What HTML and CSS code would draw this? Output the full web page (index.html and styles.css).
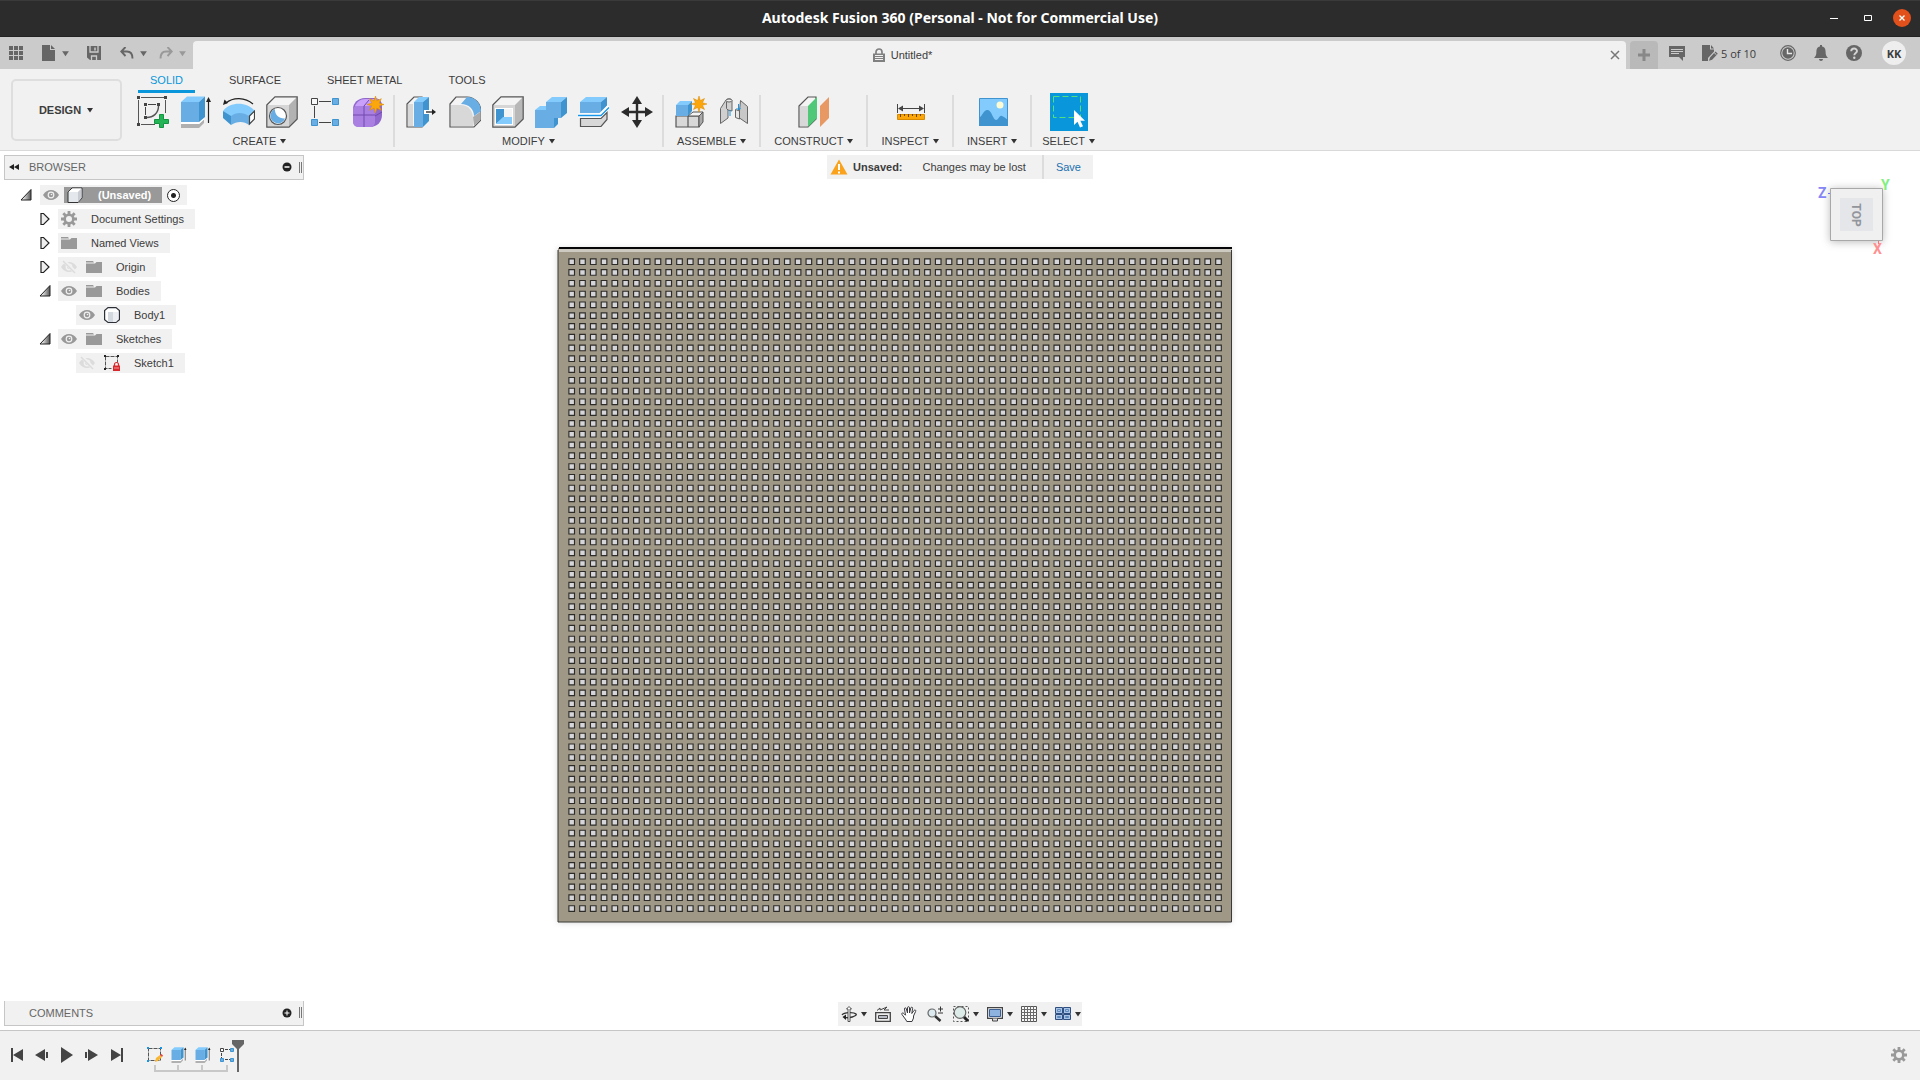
FILE: index.html
```
<!DOCTYPE html>
<html lang="en">

<head>
    <meta charset="UTF-8">
    <meta name="viewport" content="width=device-width, initial-scale=1.0">
    <title>Autodesk Fusion 360 (Personal - Not for Commercial Use)</title>
    <link rel="stylesheet" href="styles.css">
</head>

<body>
    <!-- shared icons -->
    <svg class="defs" width="0" height="0" aria-hidden="true">
        <symbol id="eye" viewBox="0 0 16 16">
            <path d="M0 8C2 4.500 5 3 8 3s6 1.500 8 5c-2 3.500-5 5-8 5S2 11.500 0 8z" fill="#999" />
            <circle cx="8" cy="8" r="3.400" fill="#f1f1f1" />
            <circle cx="8" cy="8" r="2.200" fill="#999" />
            <circle cx="8.500" cy="7.500" r=".8" fill="#f1f1f1" />
        </symbol>
        <symbol id="eye-off" viewBox="0 0 16 16">
            <path d="M0 8C2 4.500 5 3 8 3s6 1.500 8 5c-2 3.500-5 5-8 5S2 11.500 0 8z" fill="#dcdcdc" />
            <circle cx="8" cy="8" r="3.400" fill="#f1f1f1" />
            <circle cx="8" cy="8" r="2" fill="#dcdcdc" />
            <path d="M2 1l13 13" stroke="#f1f1f1" stroke-width="3.500" />
            <path d="M2 2l12 12" stroke="#dcdcdc" stroke-width="1.500" />
        </symbol>
        <symbol id="folder" viewBox="0 0 16 16">
            <path d="M0 2h7l1 1.500H0zM0 4.500h9l1.500-1.500H16V14H0z" fill="#999" />
        </symbol>
        <symbol id="gear" viewBox="0 0 16 16">
            <g fill="none" stroke="currentColor">
                <circle cx="8" cy="8" r="4.300" stroke-width="2.600" />
                <path d="M8 0v3M8 13v3M0 8h3M13 8h3M2.300 2.300l2.200 2.200M11.500 11.500l2.200 2.200M2.300 13.700l2.200-2.200M11.500 4.500l2.200-2.200" stroke-width="2.800" />
            </g>
        </symbol>
        <symbol id="closed" viewBox="0 0 12 16">
            <path d="M2 2.500h2.500l5.500 5.500-5.500 5.500H2z" fill="#eee" stroke="#222" stroke-width="1.200" />
        </symbol>
        <symbol id="open" viewBox="0 0 12 16">
            <path d="M11 2.500v10.500H1z" fill="url(#arrowFill)" stroke="#222" />
        </symbol>
        <linearGradient id="arrowFill">
            <stop offset=".2" stop-color="#eee" />
            <stop offset="1" stop-color="#555" />
        </linearGradient>
        <symbol id="caret" viewBox="0 0 8 6">
            <path d="M1 1h6L4 5.500z" fill="currentColor" />
        </symbol>
        <symbol id="star" viewBox="0 0 16 16">
            <path d="M8 0l1.300 4.500L13.500 2.500l-2 4.200L16 8l-4.500 1.300 2 4.200-4.200-2L8 16l-1.300-4.500-4.200 2 2-4.200L0 8l4.500-1.300-2-4.200 4.200 2z" fill="#fba60a" stroke="#d98b00" stroke-width=".5" />
        </symbol>
        <symbol id="extrude" viewBox="0 0 32 32">
            <path d="M1 28h18l5-5v4l-5 5H1z" fill="#b0b0b0" />
            <path d="M1 26h18l5-5v2.500l-5 4.500H1z" fill="#fff" />
            <path d="M1 6h18v20H1z" fill="#68aee5" />
            <path d="M1 6l6-5.500h18L19 6z" fill="#83cbfd" />
            <path d="M19 6l6-5.500V21l-6 5z" fill="#3f94cf" />
            <path d="M28.500 27V3" stroke="#222" stroke-width="1.200" />
            <path d="M26 6l2.500-5L31 6z" fill="#222" />
        </symbol>
        <symbol id="cursor" viewBox="0 0 12 18">
            <path d="M0 0v15l3.500-3.200L6 17.500l3-1.300-2.600-5.500H11z" fill="#fff" />
        </symbol>
    </svg>

    <header class="titlebar">
        <h1>Autodesk Fusion 360 (Personal - Not for Commercial Use)</h1>
        <div class="window-buttons">
            <button aria-label="Minimize"><svg width="18" height="18"><path d="M5 9.500h8" stroke="#fff" /></svg></button>
            <button aria-label="Maximize"><svg width="18" height="18"><path d="M5.500 6.500h7v5h-7z" fill="none" stroke="#fff" /></svg></button>
            <button aria-label="Close"><svg width="18" height="18"><circle cx="9" cy="9" r="9" fill="#e2501b" /><path d="M6.500 6.500l5 5m0-5l-5 5" stroke="#fff" stroke-width="1.300" /></svg></button>
        </div>
    </header>

    <div class="topbar">
        <div class="quick">
            <button class="q-grid" aria-label="Data panel"><svg width="14" height="14" fill="#666"><path d="M0 0h4v4H0zM5 0h4v4H5zM10 0h4v4h-4zM0 5h4v4H0zM5 5h4v4H5zM10 5h4v4h-4zM0 10h4v4H0zM5 10h4v4H5zM10 10h4v4h-4z" /></svg></button>
            <button class="q-file" aria-label="File"><svg width="14" height="16" fill="#666"><path d="M0 0h8v5h5v11H0z" /><path d="M9 0l4 4H9z" /></svg><svg class="caret big"><use href="#caret" /></svg></button>
            <button class="q-save" aria-label="Save"><svg width="14" height="14"><path d="M0 0h14v14H3L0 11.500z" fill="#666" /><path d="M3 0v6h8V0M4.500 14v-4h5v4" fill="none" stroke="#cbcbcb" stroke-width="1.300" /><path d="M8 1.500v3" stroke="#cbcbcb" stroke-width="1.500" /></svg></button>
            <button class="q-undo" aria-label="Undo"><svg width="14" height="12" fill="none" stroke="#666" stroke-width="1.900"><path d="M5.500 0L1.200 4.500 5.500 9M1.500 4.500H7c3.500 0 5.500 2.500 5.500 7" /></svg><svg class="caret big"><use href="#caret" /></svg></button>
            <button class="q-redo" aria-label="Redo"><svg width="14" height="12" fill="none" stroke="#999" stroke-width="1.900"><path d="M8.500 0l4.300 4.500L8.500 9M12.500 4.500H7c-3.500 0-5.500 2.500-5.500 7" /></svg><svg class="caret big"><use href="#caret" /></svg></button>
        </div>
        <div class="doc-tab">
            <span class="doc-name">
                <svg width="12" height="14"><path d="M3 6V4a3 3 0 016 0v2" fill="none" stroke="#808080" stroke-width="1.700" /><path d="M0 5.500h12V14H0z" fill="#808080" /><path d="M2 7.500h8M2 9.500h8M2 11.500h8" stroke="#f1f1f1" /></svg>
                Untitled*
            </span>
            <button aria-label="Close tab"><svg width="10" height="10"><path d="M1 1l8 8M9 1L1 9" stroke="#777" stroke-width="1.500" /></svg></button>
        </div>
        <button class="new-tab" aria-label="New tab"><svg width="14" height="14"><path d="M7 1v12M1 7h12" stroke="#888" stroke-width="3" /></svg></button>
        <div class="account">
            <button aria-label="Notes"><svg width="16" height="16"><path d="M0 1h16v11h-2v4l-4-4H0z" fill="#666" /><path d="M2 4.500h12M2 6.500h12M2 8.500h8" stroke="#cbcbcb" /></svg></button>
            <button class="docs"><svg width="16" height="16"><path d="M0 0h8v4.500h4v2L6 13v3H0z" fill="#666" /><path d="M9 0l3 3.500H9zM7 15.800l1-3.300 5.500-6 2.300 2.200-5.700 6z" fill="#666" /><path d="M12 7.500l2.500 2.300" stroke="#cbcbcb" /></svg>5 of 10</button>
            <button class="clock" aria-label="Job status"><svg width="16" height="16"><circle cx="8" cy="8" r="7.300" fill="none" stroke="#666" stroke-width="1.200" /><circle cx="8" cy="8" r="5.700" fill="#666" /><path d="M7.500 4v4.500H12" fill="none" stroke="#e8e8e8" stroke-width="1.400" /></svg></button>
            <button class="bell" aria-label="Notifications"><svg width="16" height="16" fill="#666"><path d="M7 0h2v1.500c3 .5 3.600 3 3.600 5.500 0 3 .8 4 2.400 6H1c1.600-2 2.400-3 2.400-6C3.400 4.500 4 2 7 1.500zM6 14h4c0 2.500-4 2.500-4 0z" /></svg></button>
            <button class="help" aria-label="Help"><svg width="16" height="16"><circle cx="8" cy="8" r="8" fill="#666" /><path d="M5.200 6.300C5.300 2.600 11 2.700 11 6c0 2-2.700 2-2.700 4.200" fill="none" stroke="#d4d4d4" stroke-width="1.900" /><circle cx="8.300" cy="12.700" r="1.200" fill="#d4d4d4" /></svg></button>
            <button class="avatar">KK</button>
        </div>
    </div>

    <div class="ribbon">
        <button class="workspace">DESIGN<svg class="caret"><use href="#caret" /></svg></button>
        <div class="tools">
            <nav class="tabs">
                <a class="active" href="#solid">SOLID</a>
                <a href="#surface">SURFACE</a>
                <a href="#sheet-metal">SHEET METAL</a>
                <a href="#tools">TOOLS</a>
            </nav>
            <div class="groups">
                <div class="group">
                    <div class="icons">
                        <button aria-label="Create Sketch"><svg width="32" height="32">
                            <path d="M4 1.500h23M1.500 4v23M4 28.500h14M28.500 4v13" fill="none" stroke="#555" />
                            <path d="M8.500 11v8M11 8.500h8" fill="none" stroke="#444" />
                            <path d="M21.500 10c0 7-5 11.500-12 11.500" fill="none" stroke="#555" stroke-width="1.400" />
                            <path d="M0 0h3v3H0zM27 0h3v3h-3zM0 27h3v3H0zM7 7h3v3H7zM20 7h3v3h-3zM7 20h3v3H7z" fill="#444" />
                            <path d="M22.500 18.500h4v5h5v4h-5v4h-4v-4h-5v-4h5z" fill="#22b455" stroke="#139440" />
                        </svg></button>
                        <button aria-label="Extrude"><svg width="32" height="32"><use href="#extrude" /></svg></button>
                        <button aria-label="Revolve"><svg width="32" height="32">
                            <path d="M3 7C10 1 22 1 30 8" fill="none" stroke="#222" stroke-width="1.200" />
                            <path d="M0 9l1.500-5.500L5 7z" fill="#222" />
                            <path d="M0 15c7-9 23-10 32 0l-6 7c-5-4-13-4-18 0z" fill="#83cbfd" />
                            <path d="M0 15l8 5v9l-8-7z" fill="#3f94cf" />
                            <path d="M8 20c5-4 12-4 18 0v9c-5-4-12-4-18 0z" fill="#68aee5" />
                            <path d="M26.500 20l5-5v8l-5 5z" fill="#fff" stroke="#444" stroke-width="1.200" />
                        </svg></button>
                        <button aria-label="Hole"><svg width="32" height="32">
                            <path d="M1 9h22v22H1z" fill="#d6d6d6" /><path d="M1 9l8-8h22l-8 8z" fill="#f4f4f4" /><path d="M23 9l8-8v22l-8 8z" fill="#b2b2b2" />
                            <path d="M.8 9L9 .8h22.200V23L23 31.200H.8z" fill="none" stroke="#555" stroke-width="1.200" />
                            <circle cx="12" cy="20" r="8.500" fill="#fff" stroke="#555" stroke-width="1.200" />
                            <path d="M9 13a7.500 7.500 0 1010 9.500C13 23 8.500 18.500 9 13z" fill="#68aee5" />
                        </svg></button>
                        <button aria-label="Pattern"><svg width="32" height="32">
                            <path d="M10 5.500h12M5.500 10v12M10 26.500h12" stroke="#444" />
                            <path d="M2.500 2.500h6v6h-6z" fill="#f8f8f8" stroke="#444" />
                            <path d="M23.500 2.500h6v6h-6zM2.500 23.500h6v6h-6zM23.500 23.500h6v6h-6z" fill="#68aee5" stroke="#3f94cf" />
                        </svg></button>
                        <button aria-label="Create Form"><svg width="32" height="32">
                            <path d="M1 13c0-6 5-11 12-11h9c6 0 8 4 8 8v9c0 7-5 12-12 12H9c-6 0-8-2-8-7z" fill="#9067cc" />
                            <path d="M3 10c2-4 5-7 10-7h11c2 0 3 2 4 3l-5 5H4z" fill="#c9a0fa" />
                            <path d="M1 14c0-3 2-4 4-4h14c3 0 4 2 4 4v12c0 3-2 5-5 5H7c-4 0-6-2-6-6z" fill="#a980e2" />
                            <path d="M12 10v21M1 19h22M23 20l7-4M12 10l5-6" fill="none" stroke="#7248ae" />
                            <svg x="15" y="0" width="17" height="17"><use href="#star" /></svg>
                        </svg></button>
                    </div>
                    <button class="label">CREATE<svg class="caret"><use href="#caret" /></svg></button>
                </div>
                <div class="group">
                    <div class="icons">
                        <button aria-label="Press Pull"><svg width="32" height="32">
                            <path d="M1 8l7-7h8v30H1z" fill="#f4f4f4" stroke="#555" stroke-width="1.200" /><path d="M2 8h5v22H2z" fill="#d8d8d8" />
                            <path d="M8 6h9v25H8z" fill="#68aee5" /><path d="M8 6l5-5h10l-6 5z" fill="#83cbfd" /><path d="M17 6l6-5v24l-6 6z" fill="#3f94cf" />
                            <path d="M18 16h7" stroke="#fff" stroke-width="4" /><path d="M20 16h8" stroke="#222" stroke-width="1.300" /><path d="M26 13l4 3-4 3z" fill="#222" />
                        </svg></button>
                        <button aria-label="Fillet"><svg width="32" height="32">
                            <path d="M1 8l6-7h11c8 0 14 7 14 15v8l-7 7H1z" fill="#f4f4f4" stroke="#555" stroke-width="1.200" />
                            <path d="M2 9h9c9 0 13 6 13 14v7H2z" fill="#d8d8d8" /><path d="M24 21l7-5v8l-6 6z" fill="#aaa" />
                            <path d="M12 8l6-7c9 0 14 7 14 14l-7 5c0-7-5-12-13-12z" fill="#68aee5" />
                        </svg></button>
                        <button aria-label="Shell"><svg width="32" height="32">
                            <path d="M1 9h22v22H1z" fill="#d6d6d6" /><path d="M1 9l8-8h22l-8 8z" fill="#f4f4f4" /><path d="M23 9l8-8v22l-8 8z" fill="#b8b8b8" />
                            <path d="M.8 9L9 .8h22.200V23L23 31.200H.8z" fill="none" stroke="#555" stroke-width="1.200" />
                            <path d="M3 12h18v17H3z" fill="#fff" /><path d="M4 13h8v8l-8 7z" fill="#3f94cf" /><path d="M12 13h8v8h-8z" fill="#f4f4f4" /><path d="M4 28l7-7h9v7z" fill="#83cbfd" />
                        </svg></button>
                        <button aria-label="Combine"><svg width="32" height="32">
                            <path d="M0 14h11V6h15v16h-7v10H0z" fill="#68aee5" />
                            <path d="M11 6l6-5h15l-6 5zM0 14l5-4h6v4z" fill="#83cbfd" /><path d="M26 6l6-5v16l-6 5zM19 22h4v6l-4 4z" fill="#3f94cf" />
                        </svg></button>
                        <button aria-label="Split Body"><svg width="32" height="32">
                            <path d="M2 6h21v11H2z" fill="#68aee5" /><path d="M2 6l6-5h21l-6 5z" fill="#83cbfd" /><path d="M23 6l6-5v9l-6 7z" fill="#3f94cf" />
                            <path d="M2.500 22.500H23l6-6v7l-6 7H2.500z" fill="#d8d8d8" stroke="#555" stroke-width="1.200" />
                            <path d="M0 19.500h22l9-9" fill="none" stroke="#fff" stroke-width="4" /><path d="M0 19.500h23l8-8" fill="none" stroke="#1596e8" stroke-width="1.300" />
                        </svg></button>
                        <button aria-label="Move"><svg width="32" height="32">
                            <path d="M16 4v24M4 16h24" stroke="#2b2b2b" stroke-width="2.400" />
                            <path d="M16 0l5 8H11zM16 32l5-8H11zM0 16l8-5v10zM32 16l-8-5v10z" fill="#2b2b2b" />
                        </svg></button>
                    </div>
                    <button class="label">MODIFY<svg class="caret"><use href="#caret" /></svg></button>
                </div>
                <div class="group">
                    <div class="icons">
                        <button aria-label="New Component"><svg width="32" height="32">
                            <path d="M1 20h12v11H1zM13 20h11v11H13z" fill="#d8d8d8" stroke="#555" stroke-width="1.200" />
                            <path d="M13 20l5-4h10l-4 4z" fill="#f4f4f4" stroke="#555" /><path d="M24 20l4-4v10l-4 5z" fill="#aaa" stroke="#555" />
                            <path d="M1 9h12v11H1z" fill="#68aee5" /><path d="M1 9l4-4h12l-4 4z" fill="#83cbfd" /><path d="M13 9l4-4v10l-4 5z" fill="#3f94cf" />
                            <svg x="16" y="0" width="16" height="16"><use href="#star" /></svg>
                        </svg></button>
                        <button aria-label="Joint"><svg width="32" height="32" stroke="#666">
                            <path d="M2.500 12.500L7 5.500c1-3.500 7-3.500 7-.5v10l-4-1v8l-7.500 5.500z" fill="#d0d0d0" /><path d="M8.500 5.500v7l1.500 1.500" fill="none" /><ellipse cx="11" cy="4.500" rx="3" ry="1.500" fill="#eee" />
                            <path d="M22.500 4.500l7 6v17l-8-5.500V15z" fill="#c8c8c8" /><path d="M17.500 13.500l4 1.500v8l-4-1.500z" fill="#e6e6e6" />
                            <path d="M12 14v6M20.500 8v6m-2-2l2 2 2-2" fill="none" stroke="#1596e8" />
                        </svg></button>
                    </div>
                    <button class="label">ASSEMBLE<svg class="caret"><use href="#caret" /></svg></button>
                </div>
                <div class="group">
                    <div class="icons">
                        <button aria-label="Offset Plane"><svg width="32" height="32">
                            <path d="M1 10l9-9h8v22l-8 8H1z" fill="#f4f4f4" stroke="#555" stroke-width="1.200" /><path d="M2 10h8v20H2z" fill="#d8d8d8" />
                            <path d="M10 10l9-9v21l-9 9z" fill="#50c878" /><path d="M22 10l9-9v21l-9 9z" fill="#e89862" />
                        </svg></button>
                    </div>
                    <button class="label">CONSTRUCT<svg class="caret"><use href="#caret" /></svg></button>
                </div>
                <div class="group">
                    <div class="icons">
                        <button aria-label="Measure"><svg width="32" height="32">
                            <path d="M2.500 8v9M29.500 8v9M4 12.500h24" stroke="#444" /><path d="M3 12.500l5-3v6zM29 12.500l-5-3v6z" fill="#444" />
                            <path d="M2.500 18.500h27v5h-27z" fill="#fba60a" stroke="#d98b00" /><path d="M5.500 18v3M9.500 18v2M13.500 18v3M17.500 18v2M21.500 18v3M25.500 18v2" stroke="#6d4500" />
                        </svg></button>
                    </div>
                    <button class="label">INSPECT<svg class="caret"><use href="#caret" /></svg></button>
                </div>
                <div class="group">
                    <div class="icons">
                        <button aria-label="Insert Image"><svg width="32" height="32">
                            <path d="M2.500 2.500h28v27h-28z" fill="#83cbfd" stroke="#3f94cf" /><circle cx="23" cy="9" r="3.500" fill="#fdfbd4" />
                            <path d="M2 22c4-3 5-9 9-8s5 10 8 10 3-5 6-4 4 3 6 4v6H2z" fill="#3f94cf" />
                        </svg></button>
                    </div>
                    <button class="label">INSERT<svg class="caret"><use href="#caret" /></svg></button>
                </div>
                <div class="group">
                    <div class="icons">
                        <button class="selected" aria-label="Select"><svg width="38" height="38">
                            <path d="M3.500 3.500h27v21h-27z" fill="none" stroke="#53e07a" stroke-dasharray="6 3" />
                            <svg x="24" y="17" width="12" height="18"><use href="#cursor" /></svg>
                        </svg></button>
                    </div>
                    <button class="label">SELECT<svg class="caret"><use href="#caret" /></svg></button>
                </div>
            </div>
        </div>
    </div>

    <main class="canvas">
        <svg class="plate" width="690" height="690" viewBox="550 240 690 690" aria-label="Body1">
            <path class="plate-shadow" d="M558 249h673v673H558z" />
            <path d="M558 248h674v674H558z" fill="#a09886" />
            <path d="M559 249h673v3H559z" fill="#cdcac2" />
            <path d="M558 250V922H1231.500V250" fill="none" stroke="#3a3a38" />
            <path d="M559 248h673" stroke="#060608" stroke-width="2" />
            <path id="holes" fill="#d6d6da" stroke="#2c2b28" stroke-width="1.150" />
        </svg>

        <aside class="side">
            <section class="browser">
                <div class="panel-head">
                    <svg width="10" height="8"><path d="M5 1v6L0 4zM10 1v6L5 4z" fill="#222" /></svg>
                    <h2>BROWSER</h2>
                    <button aria-label="Collapse"><svg width="10" height="10"><circle cx="5" cy="5" r="4.500" fill="#222" /><path d="M2.500 5h5" stroke="#fff" stroke-width="1.500" /></svg></button>
                    <span class="grip"></span>
                </div>
                <ul class="tree">
                    <li class="root">
                        <svg class="arrow"><use href="#open" /></svg>
                        <div class="node">
                            <svg class="ico"><use href="#eye" /></svg>
                            <span class="current">
                                <svg class="ico" viewBox="0 0 16 16"><path d="M1 5l4-4h10v10l-4 4.500H1z" fill="#e4e7ec" stroke="#333" /><path d="M1.500 5l4-3.500h9L11 5z" fill="#fff" /><path d="M11 5l3.500-3.500V11L11 15z" fill="#c8ccd2" /></svg>
                                (Unsaved)
                            </span>
                            <input type="radio" aria-label="Activate component" checked>
                        </div>
                    </li>
                    <li>
                        <svg class="arrow"><use href="#closed" /></svg>
                        <div class="node"><svg class="ico gear"><use href="#gear" /></svg><span>Document Settings</span></div>
                    </li>
                    <li>
                        <svg class="arrow"><use href="#closed" /></svg>
                        <div class="node"><svg class="ico"><use href="#folder" /></svg><span>Named Views</span></div>
                    </li>
                    <li>
                        <svg class="arrow"><use href="#closed" /></svg>
                        <div class="node"><svg class="ico"><use href="#eye-off" /></svg><svg class="ico"><use href="#folder" /></svg><span>Origin</span></div>
                    </li>
                    <li>
                        <svg class="arrow"><use href="#open" /></svg>
                        <div class="node"><svg class="ico"><use href="#eye" /></svg><svg class="ico"><use href="#folder" /></svg><span>Bodies</span></div>
                    </li>
                    <li class="leaf">
                        <div class="node"><svg class="ico"><use href="#eye" /></svg>
                            <svg class="ico" viewBox="0 0 16 16"><path d="M4 .6h8l3.400 3v9l-3.400 2.800H4L.6 12.600v-9z" fill="#fff" stroke="#2c3038" stroke-width="1.200" /><path d="M4 5h5v10H4z" fill="#d3d7de" /><path d="M9 5h5v7l-2 3H9z" fill="#eceef2" /></svg>
                            <span>Body1</span></div>
                    </li>
                    <li>
                        <svg class="arrow"><use href="#open" /></svg>
                        <div class="node"><svg class="ico"><use href="#eye" /></svg><svg class="ico"><use href="#folder" /></svg><span>Sketches</span></div>
                    </li>
                    <li class="leaf">
                        <div class="node"><svg class="ico"><use href="#eye-off" /></svg>
                            <svg class="ico" viewBox="0 0 16 16"><path d="M1.500 1.500h12v6M1.500 1.500v12h6" fill="none" stroke="#555" stroke-dasharray="4 1" /><path d="M0 0h2v2H0zM13 0h2v2h-2zM0 13h2v2H0z" fill="#222" /><path d="M9 10.500h7V16H9z" fill="#d9282c" /><path d="M10.500 11V9.500a2 2 0 014 0V11" fill="none" stroke="#d9282c" stroke-width="1.200" /><path d="M10 13h5" stroke="#f29a9a" /></svg>
                            <span>Sketch1</span></div>
                    </li>
                </ul>
            </section>
            <section class="panel-head comments">
                <h2>COMMENTS</h2>
                <button aria-label="Add comment"><svg width="10" height="10"><circle cx="5" cy="5" r="4.500" fill="#222" /><path d="M2.500 5h5M5 2.500v5" stroke="#fff" /></svg></button>
                <span class="grip"></span>
            </section>
        </aside>

        <div class="middle">
            <div class="notice">
                <svg width="18" height="16"><path d="M9 .5L17.500 15.500H.5z" fill="#faa21b" /><path d="M9 5v6M9 12.500v2" stroke="#fff" stroke-width="2" /></svg>
                <strong>Unsaved:</strong>
                <span>Changes may be lost</span>
                <a href="#save">Save</a>
            </div>
            <div class="navbar">
                <button aria-label="Orbit"><svg width="16" height="16"><path d="M1 9c2-3 12-3 14-1s-8 5-12 3" fill="none" stroke="#333" stroke-width="1.300" /><path d="M5 8.500L1.500 11 5 14z" fill="#222" /><path d="M7 15.500V3H5.500L8 .5 10.500 3H9v12.500z" fill="#fff" stroke="#444" stroke-width=".9" /></svg><svg class="caret"><use href="#caret" /></svg></button>
                <button aria-label="Look At"><svg width="16" height="16"><path d="M.7 6.700h14.600v8.600H.7z" fill="#eee" stroke="#444" stroke-width="1.300" /><path d="M3.500 9.500h9v3h-9z" fill="#b9bec6" stroke="#444" /><path d="M2 4.500L5 2v2l7-3-3 3h5" fill="none" stroke="#444" /></svg></button>
                <button aria-label="Pan"><svg width="16" height="16"><path d="M5 14L1 8.500c-1-1.500 1-2 2-.8l1.500 1.500L3.500 3c-.2-1.600 1.500-1.600 1.800-.2L6.500 7V1.800c0-1.500 2-1.500 2 0V7l1.300-5c.4-1.400 2-1 1.800.4L10.800 7.500 13 4.500c1-1.200 2.300-.2 1.600 1L12.500 10v2L11 15.500H5.800z" fill="#fff" stroke="#3a3a40" /></svg></button>
                <button aria-label="Zoom"><svg width="16" height="16"><path d="M8 10l5.500 5" stroke="#333" stroke-width="2.500" /><circle cx="5" cy="7" r="4" fill="#dceaf0" stroke="#666" stroke-width="1.200" /><path d="M11 3h5M13.500.5v5M11 7h5" stroke="#333" /></svg></button>
                <button aria-label="Zoom Window"><svg width="16" height="16"><path d="M.5.5h15v15H.5z" fill="none" stroke="#555" stroke-dasharray="2 2" /><path d="M10 10l5 5" stroke="#222" stroke-width="3" /><circle cx="7" cy="6.500" r="5.800" fill="#dceae8" stroke="#666" stroke-width="1.200" /></svg><svg class="caret"><use href="#caret" /></svg></button>
                <button aria-label="Display Settings"><svg width="16" height="16"><path d="M.6 1.600h14.800v10.800H.6z" fill="#f4f4f4" stroke="#444" stroke-width="1.200" /><path d="M2.500 3.500h11v7h-11z" fill="#8eb3de" stroke="#3c5f94" /><path d="M5.500 12.500v2.500h5v-2.500" fill="#ddd" stroke="#444" /></svg><svg class="caret"><use href="#caret" /></svg></button>
                <button aria-label="Grid and Snaps"><svg width="16" height="16"><path d="M.5.5h15v15H.5z" fill="#f8f8f8" stroke="#555" /><path d="M3.500 0v16M6.500 0v16M9.500 0v16M12.500 0v16M0 3.500h16M0 6.500h16M0 9.500h16M0 12.500h16" stroke="#6a6a6a" /></svg><svg class="caret"><use href="#caret" /></svg></button>
                <button aria-label="Viewports"><svg width="16" height="16"><path d="M.5 1.500h7v6h-7zM8.500 1.500h7v6h-7zM.5 8.500h7v5h-7zM8.500 8.500h7v5h-7z" fill="#a9c4e6" stroke="#2f4f80" /><path d="M2.500 3.500h3v2h-3zM10.500 3.500h3v2h-3zM2.500 10.500h3v1h-3zM10.500 10.500h3v1h-3z" fill="none" stroke="#5f88bd" /></svg><svg class="caret"><use href="#caret" /></svg></button>
            </div>
        </div>

        <div class="view">
            <svg class="cube" width="90" height="90" viewBox="0 0 90 90" aria-label="View cube">
                <path class="cube-shadow" d="M20 18h53v53H20z" />
                <path d="M20.500 18.500h52v52h-52z" fill="#f0f0f0" stroke="#a8a8a8" />
                <path d="M30 28h33v33H30z" fill="#e5e6e9" />
                <path d="M18 23.500h2" stroke="#7070ff" />
                <path d="M68.500 71v3" stroke="#ff7070" />
                <text x="8" y="28" fill="#8585f5">Z</text>
                <text x="71" y="20" fill="#80f080">Y</text>
                <text x="63" y="84" fill="#ff9090">X</text>
                <text class="face" transform="translate(42 45) rotate(90)">TOP</text>
            </svg>
        </div>
    </main>

    <footer class="timeline">
        <div class="playback">
            <button aria-label="To start"><svg width="14" height="14"><path d="M1 0h2v14H1zM13 1v12L3 7z" /></svg></button>
            <button aria-label="Step back"><svg width="14" height="14"><path d="M10 1v12L0 7zM11 4h2v6h-2z" /></svg></button>
            <button aria-label="Play"><svg width="14" height="16"><path d="M1 0v16l12-8z" /></svg></button>
            <button aria-label="Step forward"><svg width="14" height="14"><path d="M3 1v12l10-6zM0 4h2v6H0z" /></svg></button>
            <button aria-label="To end"><svg width="14" height="14"><path d="M11 0h2v14h-2zM1 1v12l10-6z" /></svg></button>
        </div>
        <div class="history">
            <div class="features">
                <button aria-label="Sketch1"><svg width="16" height="16"><path d="M1.500 1.500h12v12h-12z" fill="none" stroke="#555" stroke-dasharray="4 1" /><path d="M0 0h2v2H0zM13 0h2v2h-2zM0 13h2v2H0z" fill="#1596e8" /><path d="M8 15l1-4 4-3 2 2-4 4z" fill="#f7b733" /><path d="M13 8l2 2 1-1.500L14.500 7z" fill="#e44" /></svg></button>
                <button aria-label="Extrude1"><svg width="16" height="16"><use href="#extrude" /></svg></button>
                <button aria-label="Extrude2"><svg width="16" height="16"><use href="#extrude" /></svg></button>
                <button aria-label="Pattern1"><svg width="16" height="16"><path d="M6 2.500h5M2.500 6v5M6 12.500h5" stroke="#444" stroke-dasharray="3 1" /><path d="M1.500 1.500h3v3h-3z" fill="#fff" stroke="#444" /><path d="M11.500 1.500h3v3h-3zM1.500 11.500h3v3h-3zM11.500 11.500h3v3h-3z" fill="#68aee5" stroke="#3f94cf" /></svg></button>
            </div>
            <svg class="bracket" width="74" height="7"><path d="M1 0v6h72V0M24 0v6M48 0v6" fill="none" stroke="#c8c8c8" stroke-width="2" /></svg>
        </div>
        <svg class="marker" width="12" height="32"><path d="M0 0h12v4L7 9v23H5V9L0 4z" fill="#666" /></svg>
        <button class="settings" aria-label="Timeline settings"><svg class="ico gear"><use href="#gear" /></svg></button>
    </footer>

    <script src="script.js"></script>
</body>

</html>
```

FILE: styles.css
```
* {
    box-sizing: border-box;
}

html,
body {
    height: 100%;
    margin: 0;
    padding: 0;
}

body {
    display: flex;
    flex-direction: column;
    overflow: hidden;
    background-color: #fff;
    color: #3c3c3c;
    font-family: "Liberation Sans", Arial, sans-serif;
    font-size: 11px;
}

h1,
h2,
ul {
    margin: 0;
    padding: 0;
}

button {
    display: flex;
    align-items: center;
    justify-content: center;
    margin: 0;
    padding: 0;
    border: none;
    background: none;
    color: inherit;
    font: inherit;
}

a {
    color: inherit;
    text-decoration: none;
}

svg {
    display: block;
    flex-shrink: 0;
}

.defs {
    position: absolute;
}

.caret {
    width: 8px;
    height: 6px;
    color: #333;
}

.caret.big {
    width: 9px;
    height: 7px;
    color: inherit;
}

.ico {
    width: 16px;
    height: 16px;
}

.gear {
    color: #999;
}

/* window title */
.titlebar {
    display: flex;
    align-items: center;
    height: 37px;
    padding: 0 9px 2px;
    background-color: #2c2c2c;
    border-top: 1px solid #3a3a3a;
    border-bottom: 1px solid #222;
    color: #fff;
}

.titlebar h1 {
    flex: 1;
    padding-left: 86px;
    text-align: center;
    font-family: "Noto Sans", "Open Sans", sans-serif;
    font-size: 14px;
    line-height: 20px;
}

.window-buttons {
    display: flex;
    gap: 16px;
}

/* quick access and document tab */
.topbar {
    display: flex;
    height: 32px;
    background-color: #cbcbcb;
}

.quick {
    display: flex;
    align-items: center;
    width: 193px;
    padding-left: 9px;
    color: #666;
}

.quick button {
    gap: 5px;
}

.q-file {
    margin-left: 19px;
}

.q-save {
    margin-left: 17px;
}

.q-undo {
    margin-left: 19px;
}

.q-redo {
    margin-left: 11px;
}

.q-redo .big {
    color: #999;
}

.doc-tab {
    display: flex;
    flex: 1;
    align-items: center;
    margin-top: 4px;
    padding-right: 6px;
    background-color: #f1f1f1;
    border-radius: 4px 4px 0 0;
}

.doc-name {
    display: flex;
    flex: 1;
    align-items: center;
    justify-content: center;
    gap: 6px;
    padding-left: 2px;
}

.new-tab {
    width: 28px;
    margin: 4px 11px 0 4px;
    background-color: #b9b9b9;
    border-radius: 4px 4px 0 0;
}

.account {
    display: flex;
    align-items: center;
    padding-right: 14px;
}

.docs {
    gap: 3px;
    margin-left: 17px;
    font-family: "Open Sans", sans-serif;
}

.clock {
    margin-left: 24px;
}

.bell,
.help {
    margin-left: 17px;
}

.avatar {
    width: 24px;
    height: 24px;
    margin-left: 20px;
    background-color: #eee;
    border-radius: 50%;
    font-family: "Open Sans", sans-serif;
    font-weight: bold;
}

/* ribbon */
.ribbon {
    display: flex;
    height: 82px;
    background-color: #f1f1f1;
    border-bottom: 1px solid #d9d9d9;
}

.workspace {
    gap: 5px;
    width: 111px;
    height: 62px;
    margin: 10px 4px 0 11px;
    border: 2px solid #dedede;
    border-radius: 5px;
    font-weight: bold;
}

.tabs {
    display: flex;
    gap: 22px;
    height: 24px;
    padding-left: 12px;
}

.tabs a {
    padding: 0 12px;
    line-height: 23px;
}

.tabs .active {
    border-bottom: 3px solid #0a96da;
    color: #0a96da;
}

.groups {
    display: flex;
}

.group {
    position: relative;
    padding: 0 6px 0 5px;
}

.group:last-child {
    padding-left: 2px;
}

.group:not(:last-child)::after {
    content: "";
    position: absolute;
    top: 2px;
    right: 0;
    bottom: 3px;
    width: 2px;
    background-color: #dcdcdc;
}

.icons {
    display: flex;
    justify-content: center;
    height: 38px;
}

.icons button {
    width: 43px;
}

.icons .selected {
    width: 38px;
    background-color: #0a96da;
}

.label {
    gap: 3px;
    width: 100%;
    height: 19px;
    padding: 0 8px;
}

/* canvas */
.canvas {
    position: relative;
    display: grid;
    grid-template-columns: 304px 1fr 304px;
    flex: 1;
    min-height: 0;
}

/* the model sits freely on the canvas */
.plate {
    position: absolute;
    top: 89px;
    left: 550px;
}

.plate-shadow {
    fill: #fff;
    filter: drop-shadow(0 0 3px #ccc);
}

.cube-shadow {
    fill: #fff;
    filter: drop-shadow(0 1px 4px #bbb);
}

.side,
.middle {
    display: flex;
    flex-direction: column;
    justify-content: space-between;
    padding: 4px 0;
}

.side {
    padding-left: 4px;
}

.middle {
    align-items: center;
}

.panel-head {
    display: flex;
    align-items: center;
    height: 25px;
    padding: 0 1px 1px 4px;
    background-color: #f1f1f1;
    border: 1px solid #c6c6c6;
    color: #666;
}

.panel-head h2 {
    flex: 1;
    padding-left: 10px;
    font-size: 11px;
    font-weight: normal;
}

.comments {
    border-top: none;
}

.comments h2 {
    padding-left: 20px;
}

.grip {
    width: 3px;
    height: 11px;
    margin-left: 7px;
    border: 1px solid #777;
    border-width: 0 1px;
}

.tree {
    display: flex;
    flex-direction: column;
    gap: 4px;
    padding: 5px 0 0 35px;
    list-style: none;
}

.tree li {
    display: flex;
    align-items: center;
    gap: 7px;
}

.tree .root {
    margin-left: -19px;
    gap: 8px;
}

.tree .leaf {
    margin-left: 37px;
}

.arrow {
    width: 12px;
    height: 16px;
}

.node {
    display: flex;
    align-items: center;
    gap: 9px;
    height: 20px;
    padding: 0 11px 0 3px;
    background-color: #f1f1f1;
}

.node > span {
    padding-left: 5px;
}

.root .node {
    gap: 5px;
    padding-right: 7px;
}

.node .current {
    display: flex;
    align-items: center;
    gap: 15px;
    height: 16px;
    padding: 0 11px 0 3px;
    background-color: #999;
    color: #fff;
    font-weight: bold;
}

.node input {
    appearance: none;
    width: 13px;
    height: 13px;
    margin: 0;
    border: 1px solid #222;
    border-radius: 50%;
    background: radial-gradient(#222 0 2px, #fff 3px);
}

.notice {
    display: flex;
    align-items: center;
    height: 24px;
    padding-left: 3px;
    background-color: #f1f1f1;
}

.notice strong {
    margin: 0 20px 0 5px;
}

.notice a {
    margin-left: 16px;
    padding: 0 12px;
    border-left: 2px solid #dcdcdc;
    color: #1a70b0;
    line-height: 24px;
}

.navbar {
    display: flex;
    align-items: center;
    gap: 10px;
    height: 24px;
    padding: 0 3px;
    background-color: #f1f1f1;
}

.navbar .caret {
    margin: 0 -3px 0 3px;
}

.view {
    display: flex;
    justify-content: flex-end;
    align-items: flex-start;
    padding: 19px 20px 0 0;
}

.cube text {
    font-family: "Roboto", sans-serif;
    font-size: 14px;
    font-weight: bold;
}

.cube .face {
    font-size: 12px;
    fill: #92959c;
    text-anchor: middle;
}

/* timeline */
.timeline {
    display: flex;
    align-items: flex-start;
    height: 50px;
    background-color: #f1f1f1;
    border-top: 1px solid #c6c6c6;
}

.playback {
    display: flex;
    align-items: center;
    gap: 11px;
    padding: 16px 0 0 10px;
    fill: #444;
}

.history {
    display: flex;
    flex-direction: column;
    align-items: center;
    gap: 2px;
    padding: 16px 0 0 23px;
}

.features {
    display: flex;
    gap: 8px;
}

.marker {
    margin: 9px 0 0 -3px;
}

.settings {
    margin: 16px 13px 0 auto;
}
```

FILE: script.js
```
// 61 x 61 square holes of the plate, drawn as one path
var count = 61;
var pitch = 10.78;
var size = 5.6;
var startX = 568.9;
var startY = 258.9;
var d = "";

for (var row = 0; row < count; row++) {
    for (var col = 0; col < count; col++) {
        var x = (startX + col * pitch).toFixed(2);
        var y = (startY + row * pitch).toFixed(2);
        d += "M" + x + " " + y + "h" + size + "v" + size + "h-" + size + "z";
    }
}

document.getElementById("holes").setAttribute("d", d);
```
